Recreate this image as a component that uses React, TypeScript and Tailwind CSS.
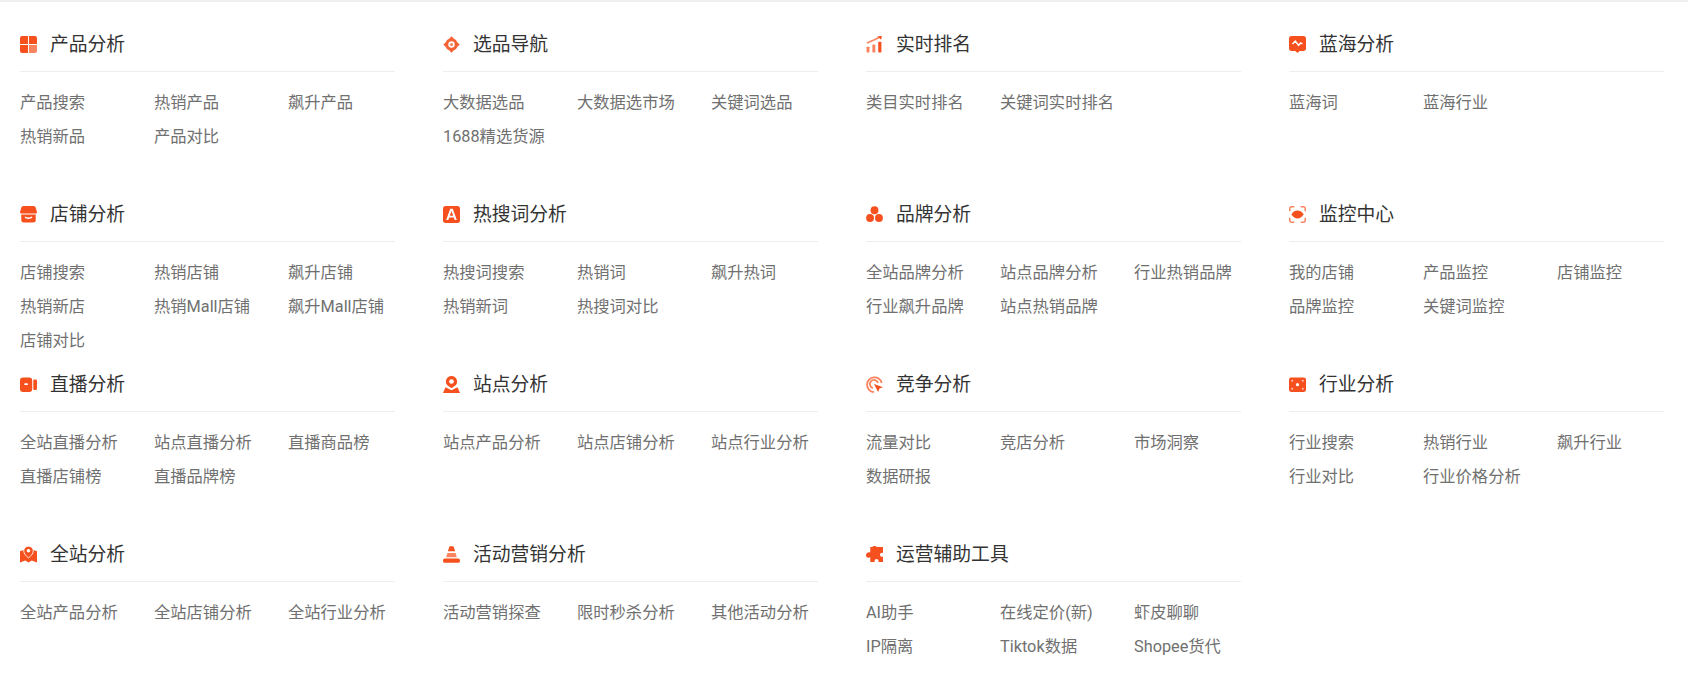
import type { ReactNode } from "react";

type Section = {
  title: string;
  icon: ReactNode;
  links: string[];
};

const orange = "#f5501e";
const pale = "#f9845f";
const iconClass = "w-[17px] h-[17px] shrink-0";

const IconProduct = () => (
  <svg viewBox="0 0 16 16" className={iconClass}>
    <path d="M2 0h5.500v7.500H0V2a2 2 0 0 1 2-2zM8.500 0H14a2 2 0 0 1 2 2v5.500H8.500zM0 8.500h7.500V16H2a2 2 0 0 1-2-2z" fill={orange} />
    <path d="M8.500 8.500H16V14a2 2 0 0 1-2 2H8.500z" fill={pale} />
  </svg>
);

const IconTarget = () => (
  <svg viewBox="0 0 16 16" className={iconClass}>
    <path d="M8 .3 10 2.400A6 6 0 0 1 13.600 6L15.700 8l-2.100 2A6 6 0 0 1 10 13.600L8 15.700l-2-2.100A6 6 0 0 1 2.400 10L.3 8l2.100-2A6 6 0 0 1 6 2.400z" fill={orange} opacity="0.9" />
    <circle cx="8" cy="8" r="3" fill="#fff" />
    <circle cx="8" cy="8" r="1.500" fill={pale} />
  </svg>
);

const IconBars = () => (
  <svg viewBox="0 0 16 16" className={iconClass}>
    <rect x="0.500" y="10" width="2.800" height="5.500" rx="0.600" fill={pale} />
    <rect x="6" y="8" width="2.800" height="7.500" rx="0.600" fill={pale} />
    <rect x="11.500" y="5.500" width="3" height="10" rx="0.600" fill={orange} />
    <path d="M0.800 6.500 8 3.600l4.600-2.400" stroke={pale} strokeWidth="1.500" fill="none" />
    <path d="M10.800.2 15 0l-.8 3.600z" fill={orange} />
  </svg>
);

const IconMonitor = () => (
  <svg viewBox="0 0 16 16" className={iconClass}>
    <path d="M2.500 0h11A2.500 2.500 0 0 1 16 2.500v9a2.500 2.500 0 0 1-2.500 2.500H10L8 16l-2-2H2.500A2.500 2.500 0 0 1 0 11.500v-9A2.500 2.500 0 0 1 2.500 0z" fill={orange} />
    <path d="M3.300 7.500 6 4.800l3 4 2-2.300 1.700 1" stroke="#fff" strokeWidth="1.400" fill="none" />
  </svg>
);

const IconShop = () => (
  <svg viewBox="0 0 16 16" className={iconClass}>
    <path d="M3.500 0h9c1.300 0 2 .7 2.400 1.800L16 5.800c0 .9-.7 1.200-1.500 1.200h-13C.7 7 0 6.700 0 5.800l1.100-4C1.500.7 2.200 0 3.500 0z" fill={orange} />
    <path d="M1.200 8h13.600v5.500a2 2 0 0 1-2 2H3.200a2 2 0 0 1-2-2z" fill={orange} />
    <path d="M4.800 10.300c1 1.700 5.400 1.700 6.400 0" stroke="#fff" strokeWidth="1.300" fill="none" />
  </svg>
);

const IconLetter = () => (
  <svg viewBox="0 0 16 16" className={iconClass}>
    <rect width="16" height="16" rx="2.500" fill={orange} />
    <path d="M6.800 2.600h2.400l3.800 10.600h-2l-.8-2.400H5.800L5 13.200H3zM6.400 9.100h3.200L8 4.800z" fill="#fff" fillRule="evenodd" />
  </svg>
);

const IconBrand = () => (
  <svg viewBox="0 0 16 16" className={iconClass}>
    <circle cx="8" cy="4" r="3.700" fill={orange} />
    <circle cx="3.800" cy="11.300" r="3.700" fill={orange} />
    <circle cx="12.200" cy="11.300" r="3.700" fill={orange} />
  </svg>
);

const IconEye = () => (
  <svg viewBox="0 0 16 16" className={iconClass}>
    <path d="M.7 5V2.500A1.800 1.800 0 0 1 2.500.7H5M11 .7h2.500a1.800 1.800 0 0 1 1.800 1.800V5M15.300 11v2.500a1.800 1.800 0 0 1-1.800 1.800H11M5 15.300H2.500a1.800 1.800 0 0 1-1.800-1.800V11" stroke={pale} strokeWidth="1.400" fill="none" />
    <path d="M2.200 8C4 5.200 6 4.300 8 4.300S12 5.200 13.800 8C12 10.800 10 11.700 8 11.700S4 10.800 2.200 8z" fill={orange} />
  </svg>
);

const IconVideo = () => (
  <svg viewBox="0 0 16 16" className={iconClass}>
    <rect x="0" y="1.500" width="11.500" height="13.500" rx="2.800" fill={orange} />
    <rect x="4" y="6.800" width="3.500" height="1.700" rx="0.800" fill="#fff" />
    <rect x="12.500" y="3.200" width="3.500" height="10" rx="1.200" fill={orange} />
  </svg>
);

const IconPin = () => (
  <svg viewBox="0 0 16 16" className={iconClass}>
    <path d="M8 0a5.200 5.200 0 0 1 3.600 9L8 11.500 4.400 9A5.200 5.200 0 0 1 8 0z" fill={orange} />
    <circle cx="8" cy="5.200" r="2.200" fill="#fff" />
    <path d="M2.300 10.500 8 13.500l5.700-3L16 16H0z" fill={orange} />
  </svg>
);

const IconCursor = () => (
  <svg viewBox="0 0 16 16" className={iconClass}>
    <path d="M14.800 6.500A7 7 0 1 0 7.500 15.200" stroke={pale} strokeWidth="1.700" fill="none" />
    <path d="M11.300 6.500A3.900 3.900 0 1 0 6.500 11.300" stroke={pale} strokeWidth="1.700" fill="none" />
    <path d="M7.500 7.500 16 10.500l-3.300 1.300-1.300 3.300z" fill={orange} />
  </svg>
);

const IconDice = () => (
  <svg viewBox="0 0 16 16" className={iconClass}>
    <rect y="1.500" width="16" height="13.500" rx="2" fill={orange} />
    <circle cx="8" cy="8.200" r="1.500" fill="#fff" />
    <circle cx="3" cy="4.500" r="0.900" fill="#fcc" />
    <circle cx="13" cy="4.500" r="0.900" fill="#fcc" />
    <circle cx="3" cy="12" r="0.900" fill="#fcc" />
    <circle cx="13" cy="12" r="0.900" fill="#fcc" />
  </svg>
);

const IconMap = () => (
  <svg viewBox="0 0 16 16" className={iconClass}>
    <path d="M0 5 3.500 3.800 8 8l4.500-4.200L16 5v10.500l-5-1.800-3 1.800-3-1.800-5 1.800z" fill={orange} />
    <path d="M8 .2a4.500 4.500 0 0 1 4.500 4.500C12.500 7 10 9.800 8 11.200 6 9.800 3.500 7 3.500 4.700A4.500 4.500 0 0 1 8 .2z" fill={orange} stroke="#fff" strokeWidth="0.800" />
    <circle cx="8" cy="4.500" r="1.700" fill="#fff" />
  </svg>
);

const IconCone = () => (
  <svg viewBox="0 0 16 16" className={iconClass}>
    <path d="M6.800.3h2.400c.5 0 .8.300 1 .8L11.400 5H4.600l1.200-3.900c.2-.5.500-.8 1-.8z" fill={orange} />
    <path d="M4.200 6.500h7.600l1.200 4H3z" fill={pale} />
    <rect y="11.800" width="16" height="4" rx="1.800" fill={orange} />
  </svg>
);

const IconPuzzle = () => (
  <svg viewBox="0 0 16 16" className={iconClass}>
    <path d="M4 1h2.200c.2-1.200 3.500-1.200 3.700 0H16v5.500c-1.500-.6-2.800.2-2.800 1.700s1.300 2.300 2.800 1.700V15h-4.300c.5-1.800-.6-2.800-1.800-2.800S7.700 13.200 8.200 15H4v-4.300C.8 11.800-.6 9.700.2 8 .6 6.300 2.500 5.600 4 6.200z" fill={orange} />
  </svg>
);

const sections: Section[] = [
  { title: "产品分析", icon: <IconProduct />, links: ["产品搜索", "热销产品", "飙升产品", "热销新品", "产品对比"] },
  { title: "选品导航", icon: <IconTarget />, links: ["大数据选品", "大数据选市场", "关键词选品", "1688精选货源"] },
  { title: "实时排名", icon: <IconBars />, links: ["类目实时排名", "关键词实时排名"] },
  { title: "蓝海分析", icon: <IconMonitor />, links: ["蓝海词", "蓝海行业"] },
  { title: "店铺分析", icon: <IconShop />, links: ["店铺搜索", "热销店铺", "飙升店铺", "热销新店", "热销Mall店铺", "飙升Mall店铺", "店铺对比"] },
  { title: "热搜词分析", icon: <IconLetter />, links: ["热搜词搜索", "热销词", "飙升热词", "热销新词", "热搜词对比"] },
  { title: "品牌分析", icon: <IconBrand />, links: ["全站品牌分析", "站点品牌分析", "行业热销品牌", "行业飙升品牌", "站点热销品牌"] },
  { title: "监控中心", icon: <IconEye />, links: ["我的店铺", "产品监控", "店铺监控", "品牌监控", "关键词监控"] },
  { title: "直播分析", icon: <IconVideo />, links: ["全站直播分析", "站点直播分析", "直播商品榜", "直播店铺榜", "直播品牌榜"] },
  { title: "站点分析", icon: <IconPin />, links: ["站点产品分析", "站点店铺分析", "站点行业分析"] },
  { title: "竞争分析", icon: <IconCursor />, links: ["流量对比", "竞店分析", "市场洞察", "数据研报"] },
  { title: "行业分析", icon: <IconDice />, links: ["行业搜索", "热销行业", "飙升行业", "行业对比", "行业价格分析"] },
  { title: "全站分析", icon: <IconMap />, links: ["全站产品分析", "全站店铺分析", "全站行业分析"] },
  { title: "活动营销分析", icon: <IconCone />, links: ["活动营销探查", "限时秒杀分析", "其他活动分析"] },
  { title: "运营辅助工具", icon: <IconPuzzle />, links: ["AI助手", "在线定价(新)", "虾皮聊聊", "IP隔离", "Tiktok数据", "Shopee货代"] },
];

export default function App() {
  return (
    <div className="h-[676px] bg-white border-t-2 border-[#f0f0f0] pl-5 pr-6 pt-[22px] overflow-hidden font-['Roboto','Noto_Sans_CJK_SC',sans-serif]">
      <div className="grid grid-cols-4 gap-x-12">
        {sections.map((section) => (
          <section key={section.title} className="h-[170px]">
            <div className="flex items-center gap-[13px] h-10">
              {section.icon}
              <h3 className="pt-0.5 text-[18.8px] leading-[38px] text-[#333] font-normal">{section.title}</h3>
            </div>
            <div className="h-px bg-[#eeeeee] mt-[7px]" />
            <ul className="grid grid-cols-[134px_134px_107px] mt-3.5">
              {section.links.map((link) => (
                <li key={link} className="h-[34px] text-[16.3px] leading-[34px] text-[#707070] whitespace-nowrap">
                  {link}
                </li>
              ))}
            </ul>
          </section>
        ))}
      </div>
    </div>
  );
}
